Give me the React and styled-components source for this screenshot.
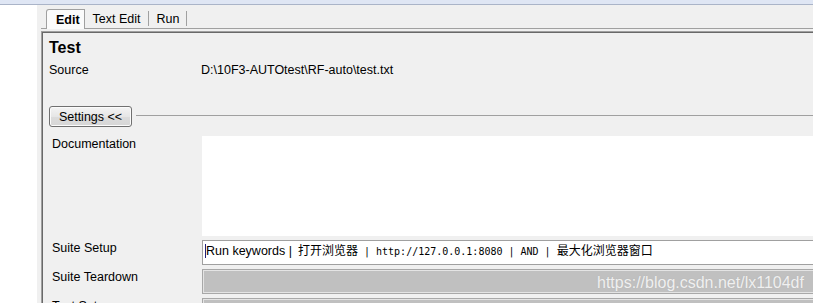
import React from "react";
import styled, { createGlobalStyle } from "styled-components";

const Global = createGlobalStyle`
  html, body { margin: 0; padding: 0; background: #ffffff; }
  body { font-family: "Liberation Sans", Arial, sans-serif; overflow: hidden; }
`;

const Page = styled.div`
  position: relative;
  width: 813px;
  height: 303px;
  overflow: hidden;
  display: flex;
  flex-direction: column;
  font-size: 12.5px;
  color: #000;
`;

const TopStrip = styled.div`
  height: 4px;
  flex: none;
  background: #dfe6f4;
  border-bottom: 1px solid #aab4c8;
`;

const Body = styled.div`
  flex: 1;
  display: flex;
  min-height: 0;
`;

const LeftBlank = styled.div`
  width: 37px;
  flex: none;
  background: #ffffff;
`;

const Workspace = styled.div`
  flex: 1;
  background: #f0f0f0;
  padding: 4px 0 0 4px;
  display: flex;
  flex-direction: column;
  min-width: 0;
`;

const TabBar = styled.div`
  height: 19px;
  flex: none;
  display: flex;
  align-items: stretch;
  padding-left: 5px;
  border-bottom: 1px solid #a0a0a0;
  margin-right: -40px;
`;

const Tab = styled.div`
  position: relative;
  display: flex;
  align-items: center;
  padding: 0 ${(p) => (p.$active ? "4px 0 9px" : "8px")};
  font-weight: ${(p) => (p.$active ? "bold" : "normal")};
  background: ${(p) => (p.$active ? "#fbfbfb" : "transparent")};
  border: ${(p) => (p.$active ? "1px solid #a0a0a0" : "none")};
  border-bottom: none;
  border-radius: 3px 0 0 0;
  margin-bottom: ${(p) => (p.$active ? "-1px" : "0")};
  padding-top: 1px;
  ${(p) =>
    p.$sep
      ? `&::after { content: ""; position: absolute; right: 0; top: 2px; bottom: 2px; width: 1px; background: #a0a0a0; }`
      : ""}
`;

const Panel = styled.div`
  margin-top: 2px;
  margin-right: -40px;
  border-top: 1px solid #a0a0a0;
  border-left: 1px solid #a0a0a0;
  box-shadow: inset 1px 1px 0 #696969;
  padding: 6px 0 0 7px;
  flex: 1;
`;

const Title = styled.div`
  font-size: 16px;
  font-weight: bold;
  line-height: 19px;
`;

const SourceRow = styled.div`
  display: grid;
  grid-template-columns: 152px 1fr;
  line-height: 16px;
  margin-top: 5px;
`;

const SettingsHeader = styled.div`
  display: flex;
  align-items: center;
  gap: 4px;
  margin-top: 28px;
`;

const SettingsButton = styled.button`
  height: 21px;
  width: 83px;
  padding: 0;
  border: 1px solid #707070;
  border-radius: 3px;
  background: linear-gradient(#f4f4f4, #e6e6e6 50%, #dcdcdc 51%, #d6d6d6);
  font-family: "Liberation Sans", Arial, sans-serif;
  font-size: 12.5px;
  color: #000;
  box-shadow: inset 0 0 0 1px #fbfbfb;
`;

const Rule = styled.div`
  flex: 1;
  height: 1px;
  background: #a0a0a0;
  margin-top: -2px;
`;

const SettingsGrid = styled.div`
  display: grid;
  grid-template-columns: 150px 1fr;
  grid-auto-rows: auto;
  row-gap: 4px;
  margin-left: 3px;
  margin-top: 9px;
`;

const Label = styled.div`
  line-height: 16px;
`;

const DocArea = styled.div`
  height: 100px;
  background: #ffffff;
`;

const Field = styled.div`
  box-sizing: border-box;
  height: 25px;
  border: 1px solid ${(p) => (p.$disabled ? "#a8a8a8" : "#a0a0a0")};
  background: ${(p) => (p.$disabled ? "#c0c0c0" : "#ffffff")};
  box-shadow: ${(p) => (p.$disabled ? "inset 0 0 0 1px #e4e4e4" : "none")};
  padding: 1px 0 0 2px;
  line-height: 16px;
  white-space: nowrap;
  overflow: hidden;
`;

const Caret = styled.span`
  display: inline-block;
  width: 1px;
  height: 14px;
  background: #20207a;
  vertical-align: -3px;
`;

const Sans = styled.span`
  font-family: "Liberation Sans", Arial, sans-serif;
  font-size: 12.5px;
  line-height: 16px;
`;

const Mono = styled.span`
  font-family: "DejaVu Sans Mono", "Liberation Mono", monospace;
  font-size: 10px;
  line-height: 16px;
  white-space: pre;
  color: #000;
`;

const Cjk = styled.span`
  font-family: "Noto Sans CJK SC", sans-serif;
  font-size: 12px;
  line-height: 16px;
`;

const Watermark = styled.div`
  position: absolute;
  left: 597px;
  top: 274px;
  font-family: "Liberation Sans", Arial, sans-serif;
  font-size: 16px;
  line-height: 18px;
  color: rgba(255, 255, 255, 0.82);
  text-shadow: 0 0 1px rgba(150, 150, 150, 0.4);
  pointer-events: none;
`;

export default function App() {
  return (
    <>
      <Global />
      <Page>
        <TopStrip />
        <Body>
          <LeftBlank />
          <Workspace>
            <TabBar>
              <Tab $active>Edit</Tab>
              <Tab $sep>Text Edit</Tab>
              <Tab $sep>Run</Tab>
            </TabBar>
            <Panel>
              <Title>Test</Title>
              <SourceRow>
                <span>Source</span>
                <span>D:\10F3-AUTOtest\RF-auto\test.txt</span>
              </SourceRow>
              <SettingsHeader>
                <SettingsButton>Settings &lt;&lt;</SettingsButton>
                <Rule />
              </SettingsHeader>
              <SettingsGrid>
                <Label>Documentation</Label>
                <DocArea />
                <Label>Suite Setup</Label>
                <Field>
                  <Caret />
                  <Sans>Run keywords |</Sans>
                  <Mono> </Mono>
                  <Cjk>打开浏览器</Cjk>
                  <Mono> | http://127.0.0.1:8080 | AND | </Mono>
                  <Cjk>最大化浏览器窗口</Cjk>
                </Field>
                <Label>Suite Teardown</Label>
                <Field $disabled />
                <Label>Test Setup</Label>
                <Field $disabled />
              </SettingsGrid>
            </Panel>
          </Workspace>
        </Body>
        <Watermark>https://blog.csdn.net/lx1104df</Watermark>
      </Page>
    </>
  );
}
